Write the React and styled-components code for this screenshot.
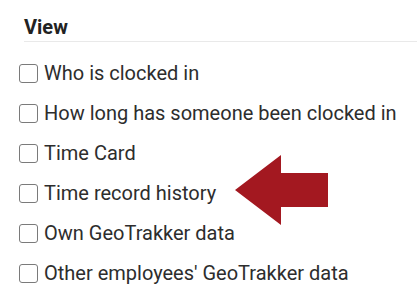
import React from 'react';
import styled, { createGlobalStyle } from 'styled-components';

const GlobalStyle = createGlobalStyle`
  body {
    margin: 0;
    background: #ffffff;
    font-family: Roboto, "Liberation Sans", sans-serif;
  }
`;

const PERMISSIONS = [
    'Who is clocked in',
    'How long has someone been clocked in',
    'Time Card',
    'Time record history',
    'Own GeoTrakker data',
    "Other employees' GeoTrakker data",
];

const Panel = styled.div`
    position: relative;
    width: 417px;
    height: 307px;
    padding: 15px 0 0 19px;
    box-sizing: border-box;
    overflow: hidden;
`;

const Heading = styled.h3`
    margin: 0 0 11px 5px;
    padding-bottom: 2px;
    font-size: 20px;
    line-height: 24px;
    font-weight: 700;
    color: #222222;
    border-bottom: 1px solid #e9e9e9;
`;

const List = styled.div`
    display: flex;
    flex-direction: column;
`;

const Row = styled.label`
    display: flex;
    align-items: center;
    gap: 6px;
    height: 40px;
    font-size: 20px;
    line-height: 40px;
    color: #2d2d2d;
    white-space: nowrap;
`;

const Box = styled.input`
    appearance: none;
    -webkit-appearance: none;
    margin: 0;
    width: 19px;
    height: 19px;
    border: 1.5px solid #7a7a7a;
    border-radius: 3px;
    background: #fff;
    flex-shrink: 0;
`;

const Arrow = styled.svg`
    position: absolute;
    left: 235px;
    top: 155px;
`;

export default function App() {
    return (
        <>
            <GlobalStyle />
            <Panel>
                <Heading>View</Heading>
                <List>
                    {PERMISSIONS.map(label => (
                        <Row key={label}>
                            <Box type="checkbox" />
                            {label}
                        </Row>
                    ))}
                </List>
                {/* red pointer at "Time record history" */}
                <Arrow width="94" height="71" viewBox="0 0 94 71">
                    <polygon points="0,35 46,0 46,18 93,18 93,52 46,52 46,70" fill="#a31820" />
                </Arrow>
            </Panel>
        </>
    );
}
